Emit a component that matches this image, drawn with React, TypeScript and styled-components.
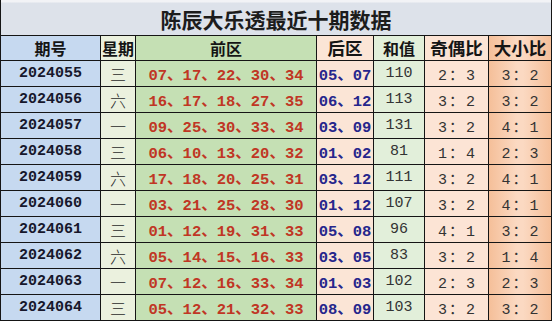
import React from "react";
import styled, { createGlobalStyle } from "styled-components";

const Global = createGlobalStyle`
  html, body { margin: 0; padding: 0; background: #ffffff; }
  body { font-family: "Noto Sans CJK SC", "Liberation Sans", sans-serif; }
`;

type ColKey = "period" | "week" | "front" | "back" | "sum" | "odd" | "size";

const colBg: Record<ColKey, string> = {
  period: "#c6d9f0",
  week: "#ebf1de",
  front: "#c5e0b4",
  back: "#fbe5d6",
  sum: "#e2efda",
  odd: "#fce4d5",
  size: "linear-gradient(90deg, #f5bf99 0%, #fbd9c2 45%, #fbd9c2 55%, #f5bf99 100%)",
};

const Sheet = styled.div`
  width: 552px;
  height: 321px;
  box-sizing: border-box;
  background: #151515;
  padding: 0 1px 1px 1px;
  display: grid;
  grid-template-columns: 99px 34px 180px 56px 50px 63px 62px;
  grid-template-rows: 35px 24px repeat(10, 25px);
  gap: 1px;
`;

const Title = styled.div`
  grid-column: 1 / -1;
  background: linear-gradient(180deg, #f2f3f6 0px, #f2f3f6 2px, #dde2ea 3px, #dde2ea 100%);
  display: flex;
  align-items: center;
  justify-content: center;
  padding-top: 2px;
  font-family: "Noto Sans CJK SC", sans-serif;
  font-weight: 700;
  font-size: 21px;
  color: #1c1c1c;
`;

const Cell = styled.div<{ $col: ColKey }>`
  background: ${(p) => colBg[p.$col]};
  display: flex;
  align-items: center;
  justify-content: center;
  overflow: hidden;
  white-space: nowrap;
`;

const HeadCell = styled(Cell)<{ $large?: boolean }>`
  font-family: "Noto Sans CJK SC", sans-serif;
  font-weight: 700;
  font-size: ${(p) => (p.$large ? "17.5px" : "16px")};
  color: #151515;
  line-height: 1;
`;

const Period = styled.span`
  font-family: "Liberation Mono", monospace;
  font-weight: 700;
  font-size: 15px;
  color: #17172b;
`;

const Week = styled.span`
  font-family: "Noto Sans CJK SC", sans-serif;
  font-weight: 300;
  font-size: 16px;
  color: #2a2a2a;
`;

const Balls = styled.span<{ $tone: "red" | "blue" }>`
  font-family: "Liberation Mono", "Noto Sans CJK SC", monospace;
  font-weight: 700;
  font-size: 15.5px;
  color: ${(p) => (p.$tone === "red" ? "#c03624" : "#26268c")};
`;

const Plain = styled.span<{ $spaced?: boolean }>`
  font-family: "Liberation Mono", "Noto Sans CJK SC", monospace;
  font-size: 15px;
  color: #333333;
  letter-spacing: ${(p) => (p.$spaced ? "2px" : "0")};
  margin-right: ${(p) => (p.$spaced ? "-2px" : "0")};
`;

type Row = {
  period: string;
  week: string;
  front: string[];
  back: string[];
  sum: string;
  odd: string;
  size: string;
};

const rows: Row[] = [
  { period: "2024055", week: "三", front: ["07", "17", "22", "30", "34"], back: ["05", "07"], sum: "110", odd: "2：3", size: "3：2" },
  { period: "2024056", week: "六", front: ["16", "17", "18", "27", "35"], back: ["06", "12"], sum: "113", odd: "3：2", size: "3：2" },
  { period: "2024057", week: "一", front: ["09", "25", "30", "33", "34"], back: ["03", "09"], sum: "131", odd: "3：2", size: "4：1" },
  { period: "2024058", week: "三", front: ["06", "10", "13", "20", "32"], back: ["01", "02"], sum: "81", odd: "1：4", size: "2：3" },
  { period: "2024059", week: "六", front: ["17", "18", "20", "25", "31"], back: ["03", "12"], sum: "111", odd: "3：2", size: "4：1" },
  { period: "2024060", week: "一", front: ["03", "21", "25", "28", "30"], back: ["01", "12"], sum: "107", odd: "3：2", size: "4：1" },
  { period: "2024061", week: "三", front: ["01", "12", "19", "31", "33"], back: ["05", "08"], sum: "96", odd: "4：1", size: "3：2" },
  { period: "2024062", week: "六", front: ["05", "14", "15", "16", "33"], back: ["03", "05"], sum: "83", odd: "3：2", size: "1：4" },
  { period: "2024063", week: "一", front: ["07", "12", "16", "33", "34"], back: ["01", "03"], sum: "102", odd: "2：3", size: "2：3" },
  { period: "2024064", week: "三", front: ["05", "12", "21", "32", "33"], back: ["08", "09"], sum: "103", odd: "3：2", size: "3：2" },
];

const headers: { key: ColKey; label: string; large?: boolean }[] = [
  { key: "period", label: "期号" },
  { key: "week", label: "星期" },
  { key: "front", label: "前区" },
  { key: "back", label: "后区", large: true },
  { key: "sum", label: "和值" },
  { key: "odd", label: "奇偶比", large: true },
  { key: "size", label: "大小比", large: true },
];

export default function App() {
  return (
    <>
      <Global />
      <Sheet>
        <Title>陈辰大乐透最近十期数据</Title>
        {headers.map((h) => (
          <HeadCell key={h.key} $col={h.key} $large={h.large}>
            {h.label}
          </HeadCell>
        ))}
        {rows.map((r) => (
          <React.Fragment key={r.period}>
            <Cell $col="period">
              <Period>{r.period}</Period>
            </Cell>
            <Cell $col="week">
              <Week>{r.week}</Week>
            </Cell>
            <Cell $col="front">
              <Balls $tone="red">{r.front.join("、")}</Balls>
            </Cell>
            <Cell $col="back">
              <Balls $tone="blue">{r.back.join("、")}</Balls>
            </Cell>
            <Cell $col="sum">
              <Plain>{r.sum}</Plain>
            </Cell>
            <Cell $col="odd">
              <Plain $spaced>{r.odd}</Plain>
            </Cell>
            <Cell $col="size">
              <Plain $spaced>{r.size}</Plain>
            </Cell>
          </React.Fragment>
        ))}
      </Sheet>
    </>
  );
}
